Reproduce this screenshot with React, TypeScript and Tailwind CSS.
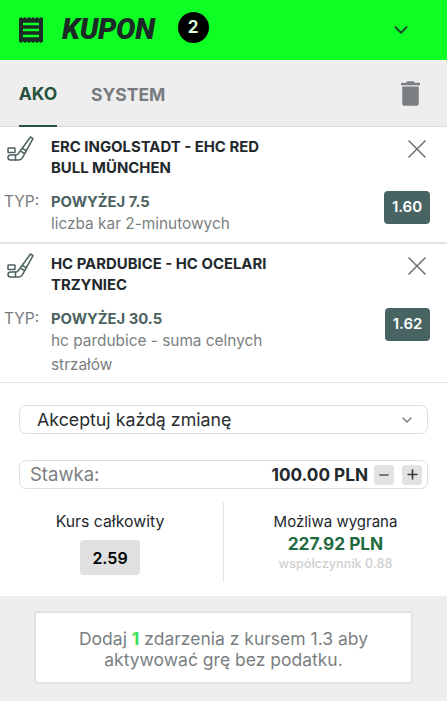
import { ChevronDown, Minus, Plus, X } from "lucide-react"

const font = { fontFamily: "Inter" }

function ReceiptIcon() {
  return (
    <svg width="24" height="26" viewBox="0 0 24 26" fill="none">
      <path
        d="M0 1.5l2-1.5 2 1.5 2-1.5 2 1.5 2-1.5 2 1.5 2-1.5 2 1.5 2-1.5 2 1.5 2-1.5 2 1.5v23l-2 1.5-2-1.5-2 1.5-2-1.5-2 1.5-2-1.5-2 1.5-2-1.5-2 1.5-2-1.5-2 1.5-2-1.5z"
        fill="#1c2a26"
      />
      <path d="M4 7h16M4 13h16M4 19h16" stroke="#0dff23" strokeWidth="2.4" />
    </svg>
  )
}

function StickIcon() {
  return (
    <svg width="28" height="28" viewBox="0 0 28 28" fill="none" stroke="#4c625f" strokeWidth="1.5" strokeLinejoin="round" strokeLinecap="round">
      <path d="M24.5 1l2.5 1.6-10.5 19c-.9 1.6-2 2.4-3.8 2.4H4.5C2.8 24 2 23 2 21.5S2.8 19 4.5 19H10c1 0 1.7-.5 2.2-1.3z" />
      <path d="M16.5 12.5l3.6 2.2M15 15.3l3.6 2.2" />
      <path d="M9.5 19v5" />
      <rect x="2" y="12" width="7" height="4.5" rx=".6" />
    </svg>
  )
}

interface Bet {
  match: string[]
  pick: string
  market: string[]
  odds: string
  oddsWidth: string
  height: string
}

const bets: Bet[] = [
  {
    match: ["ERC INGOLSTADT - EHC RED", "BULL MÜNCHEN"],
    pick: "POWYŻEJ 7.5",
    market: ["liczba kar 2-minutowych"],
    odds: "1.60",
    oddsWidth: "w-[46px]",
    height: "h-[115px]",
  },
  {
    match: ["HC PARDUBICE - HC OCELARI", "TRZYNIEC"],
    pick: "POWYŻEJ 30.5",
    market: ["hc pardubice - suma celnych", "strzałów"],
    odds: "1.62",
    oddsWidth: "w-[45px]",
    height: "h-[138px]",
  },
]

function BetRow({ bet }: { bet: Bet }) {
  return (
    <div className={`flex pr-[17px] pt-[9px] ${bet.height}`}>
      <div className="w-[51px] shrink-0 pl-[6px]">
        <StickIcon />
        <div className="mt-[28px] -ml-[2px] text-[15.5px] leading-[20px] text-[#777b7d]">TYP:</div>
      </div>
      <div className="min-w-0 flex-1">
        <div className="mt-[1px] text-[14.9px] font-bold leading-[21px] text-[#22282c]">
          {bet.match.map((line) => (
            <div key={line}>{line}</div>
          ))}
        </div>
        <div className="mt-[13px] text-[14.8px] font-bold leading-[20px] text-[#4c625f]">{bet.pick}</div>
        <div className="text-[15.4px] leading-[24px] text-[#7b7f81]">
          {bet.market.map((line) => (
            <div key={line}>{line}</div>
          ))}
        </div>
      </div>
      <div className="flex shrink-0 flex-col items-end">
        <X size={32} strokeWidth={1.25} className="-mt-[3px] -mb-[5px] -mr-[3px] text-[#6f7476]" />
        <div className={`mt-[31px] flex h-[33px] ${bet.oddsWidth} items-center justify-center rounded-[4px] bg-[#486462] text-[15px] font-semibold text-white`}>
          {bet.odds}
        </div>
      </div>
    </div>
  )
}

export default function App() {
  return (
    <div className="flex h-[701px] w-[447px] flex-col overflow-hidden bg-white" style={font}>
      <header className="flex h-[60px] shrink-0 items-center bg-[#0dff23] pl-[19px] pr-[35px]">
        <ReceiptIcon />
        <span className="ml-[19px] text-[29px] font-black italic tracking-[-0.3px] text-[#1c2a26]" style={{ fontFamily: "Roboto" }}>
          KUPON
        </span>
        <span className="mb-[5px] ml-[23px] flex h-[31px] w-[31px] items-center justify-center rounded-full bg-black text-[17px] font-bold text-[#d8ffd8]">
          2
        </span>
        <ChevronDown size={22} strokeWidth={2.2} className="ml-auto text-[#1c4a2c]" />
      </header>

      <nav className="flex h-[67px] shrink-0 border-b-[1px] border-[#dcdcdc] bg-[#eeeeee] px-[19px]">
        <div className="flex h-[67px] w-[38px] items-center justify-center whitespace-nowrap border-b-2 border-[#27523f] pt-[4px] text-[17.5px] font-bold text-[#27523f]">
          AKO
        </div>
        <div className="ml-[34px] flex h-[66px] items-center pt-[4px] text-[17.5px] font-bold text-[#777b7f]">SYSTEM</div>
        <svg width="19" height="25" viewBox="0 0 20 26" className="ml-auto mr-[8px] mt-[21px]" fill="#7b7f83">
          <path d="M6.5 0h7l1 1.6H20v2.6H0V1.6h5.5zM1.3 5.5h17.4v18.2c0 1.3-1 2.3-2.3 2.3H3.6c-1.3 0-2.3-1-2.3-2.3z" />
        </svg>
      </nav>

      <div className="border-b-2 border-[#e2e2e2]">
        <BetRow bet={bets[0]} />
      </div>
      <div className="border-b border-[#e2e2e2]">
        <BetRow bet={bets[1]} />
      </div>

      <div className="px-[19px] pt-[22px]">
        <div className="flex h-[29px] items-center justify-between rounded-[7px] border border-[#dedede] pl-[17px] pr-[12px] pt-[1px] text-[17.8px] text-[#2a2e31]">
          Akceptuj każdą zmianę
          <ChevronDown size={16} strokeWidth={2} className="text-[#6f7476]" />
        </div>

        <div className="mt-[26px] flex h-[29px] items-center rounded-[7px] border border-[#dedede] pl-[10px] pr-[5px]">
          <span className="text-[18.5px] text-[#7b7f81]">Stawka:</span>
          <span className="ml-auto text-[17.2px] font-bold text-[#22282c]">100.00 PLN</span>
          <span className="ml-[6px] flex h-[20px] w-[20px] items-center justify-center rounded-[3px] bg-[#e2e2e2]">
            <Minus size={14} strokeWidth={2.6} className="text-[#55595c]" />
          </span>
          <span className="ml-[8px] flex h-[20px] w-[20px] items-center justify-center rounded-[3px] bg-[#e2e2e2]">
            <Plus size={15} strokeWidth={2.6} className="text-[#33383b]" />
          </span>
        </div>
      </div>

      <div className="mt-[13px] flex h-[80px] shrink-0">
        <div className="flex w-[224px] flex-col items-center border-r border-[#e2e2e2] pr-[3px] pt-[10px]">
          <div className="text-[15.8px] leading-[20px] text-[#22282c]">Kurs całkowity</div>
          <div className="mt-[8px] flex h-[35px] w-[60px] items-center justify-center rounded-[4px] bg-[#e0e0e0] text-[16px] font-semibold text-black">
            2.59
          </div>
        </div>
        <div className="flex flex-1 flex-col items-center pt-[10px]">
          <div className="text-[15px] leading-[20px] text-[#22282c]">Możliwa wygrana</div>
          <div className="text-[17.3px] font-bold leading-[24px] text-[#1f6b3f]">227.92 PLN</div>
          <div className="text-[12.7px] font-medium leading-[16px] text-[#d0d0d0]">współczynnik 0.88</div>
        </div>
      </div>

      <div className="mt-[14px] flex-1 bg-[#eeeeee] px-[34px] pt-[15px]">
        <div className="flex h-[73px] flex-col items-center justify-center rounded-[4px] border-2 border-[#e2e2e2] bg-white pt-[2px] text-[17.5px] leading-[21px] text-[#7b7f81]">
          <div>
            Dodaj <span className="font-bold text-[#3de05a]">1</span> zdarzenia z kursem 1.3 aby
          </div>
          <div>aktywować grę bez podatku.</div>
        </div>
      </div>
    </div>
  )
}
